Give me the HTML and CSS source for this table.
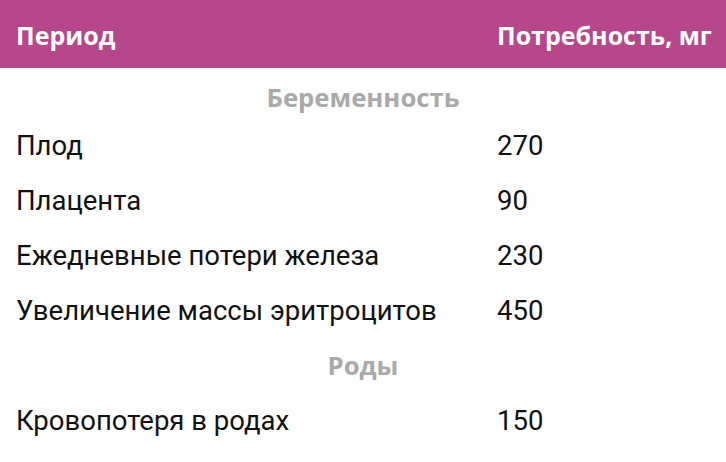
FILE: index.html
```html
<!DOCTYPE html>
<html lang="ru">
<head>
<meta charset="utf-8">
<link rel="stylesheet" href="styles.css">
</head>
<body>
<div class="table">
  <div class="head">
    <div class="c1">Период</div>
    <div class="c2">Потребность, мг</div>
  </div>
  <div class="group first">Беременность</div>
  <div class="row"><div class="c1">Плод</div><div class="c2">270</div></div>
  <div class="row"><div class="c1">Плацента</div><div class="c2">90</div></div>
  <div class="row"><div class="c1">Ежедневные потери железа</div><div class="c2">230</div></div>
  <div class="row"><div class="c1">Увеличение массы эритроцитов</div><div class="c2">450</div></div>
  <div class="group">Роды</div>
  <div class="row"><div class="c1">Кровопотеря в родах</div><div class="c2">150</div></div>
</div>
</body>
</html>
```
FILE: styles.css
```css
html, body {
  margin: 0;
  padding: 0;
  background: #fff;
}
body {
  width: 726px;
  height: 462px;
  overflow: hidden;
  font-family: Roboto, "Open Sans", sans-serif;
}
.table {
  display: flex;
  flex-direction: column;
}
.head {
  display: grid;
  grid-template-columns: 481px 1fr;
  height: 68px;
  box-sizing: border-box;
  padding: 3px 0 0 16px;
  line-height: 65px;
  background: #b5478a;
  color: #fff;
  font-family: "Open Sans", sans-serif;
  font-weight: 700;
  font-size: 25px;
}
.row {
  display: grid;
  grid-template-columns: 481px 1fr;
  height: 55px;
  line-height: 55px;
  padding-left: 16px;
  font-size: 27.5px;
  color: #111;
}
.group {
  height: 55px;
  line-height: 55px;
  text-align: center;
  font-family: "Open Sans", sans-serif;
  font-size: 25.7px;
  font-weight: 700;
  color: #a9a9a9;
}
.group.first {
  height: 50px;
  box-sizing: border-box;
  padding-top: 10px;
  line-height: 40px;
}
```
